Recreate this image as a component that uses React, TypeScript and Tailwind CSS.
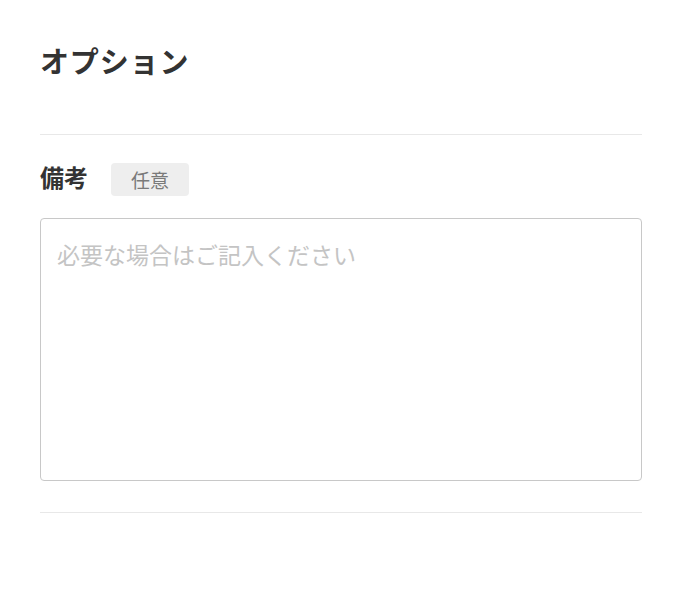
export default function App() {
  return (
    <div className="min-h-[593px] bg-white pl-10 pr-[38px] pt-[39px] font-['Noto_Sans_CJK_JP',sans-serif] text-[#333]">
      <h2 className="text-[29px] font-bold leading-[42px] tracking-[0.03em]">オプション</h2>

      <div className="mt-[53px] border-t border-[#e8e8e8]" />

      <div className="mt-[28px] flex items-start gap-[23px]">
        <span className="text-[24px] font-bold leading-[28px]">備考</span>
        <span className="rounded-[4px] bg-[#eeeeee] px-[20px] py-[3px] text-[19px] leading-[27px] text-[#7a7a7a]">
          任意
        </span>
      </div>

      <textarea
        className="mt-[22px] block h-[263px] w-full resize-none rounded-[4px] border border-[#c8c8c8] px-4 py-[18px] text-[23px] leading-[34px] outline-none placeholder:text-[#c4c4c4]"
        placeholder="必要な場合はご記入ください"
      />

      <div className="mt-[31px] border-t border-[#e8e8e8]" />
    </div>
  );
}
